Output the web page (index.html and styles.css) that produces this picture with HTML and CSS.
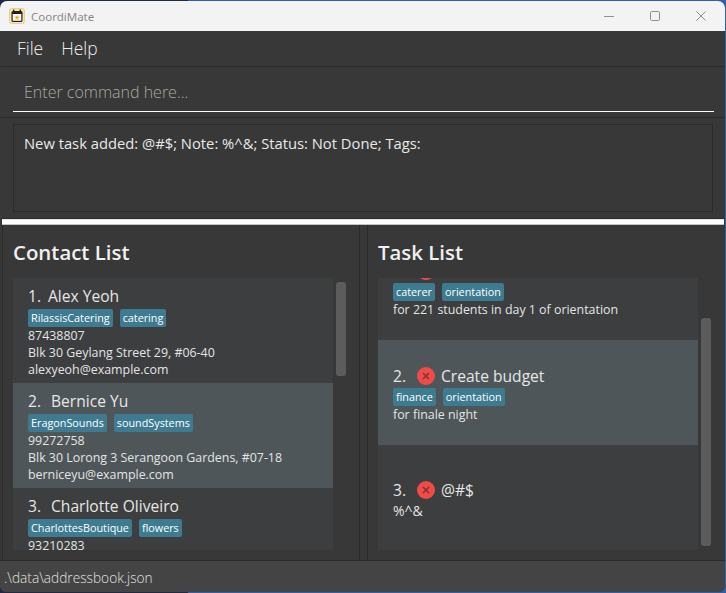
FILE: index.html
```html
<!DOCTYPE html>
<html lang="en">
<head>
<meta charset="utf-8">
<title>CoordiMate</title>
<link rel="stylesheet" href="styles.css">
</head>
<body>
<div class="window">
  <header class="titlebar">
    <svg class="appicon" width="16" height="16" viewBox="0 0 16 16"><rect x="0.5" y="0.5" width="15" height="15" rx="2" fill="#fbe3a6" stroke="#e8cf95"/><rect x="2.5" y="3" width="11" height="11" rx="1.5" fill="#222"/><rect x="4" y="1.5" width="1.4" height="3" fill="#222"/><rect x="10.6" y="1.5" width="1.4" height="3" fill="#222"/><rect x="3.7" y="6" width="8.6" height="6.8" fill="#fff"/><path d="M8 7l.8 1.6 1.7.2-1.2 1.2.3 1.7L8 11l-1.6.7.3-1.7-1.2-1.2 1.7-.2z" fill="#f5b312"/></svg>
    <span class="apptitle">CoordiMate</span>
    <div class="controls">
      <svg width="12" height="12" viewBox="0 0 12 12"><path d="M1 6.5h10" stroke="#8f8f8f" fill="none"/></svg>
      <svg width="12" height="12" viewBox="0 0 12 12"><rect x="1.5" y="1.5" width="9" height="9" rx="1.2" stroke="#8f8f8f" fill="none"/></svg>
      <svg width="12" height="12" viewBox="0 0 12 12"><path d="M1.5 1.5l9 9M10.5 1.5l-9 9" stroke="#8f8f8f" fill="none"/></svg>
    </div>
  </header>
  <nav class="menubar"><span>File</span><span>Help</span></nav>
  <section class="commandbox"><div class="commandinput">Enter command here...</div></section>
  <section class="resultbox"><div class="resulttext">New task added: @#$; Note: %^&amp;; Status: Not Done; Tags:</div></section>
  <div class="splitter"></div>
  <main class="panes">
    <section class="pane">
      <h2>Contact List</h2>
      <div class="listwrap">
        <div class="list">
          <article class="card">
            <div class="name"><span class="num one">1.</span>Alex Yeoh</div>
            <div class="tags"><span class="tag">RilassisCatering</span><span class="tag">catering</span></div>
            <div class="line">87438807</div>
            <div class="line">Blk 30 Geylang Street 29, #06-40</div>
            <div class="line">alexyeoh@example.com</div>
          </article>
          <article class="card selected">
            <div class="name"><span class="num">2.</span>Bernice Yu</div>
            <div class="tags"><span class="tag">EragonSounds</span><span class="tag">soundSystems</span></div>
            <div class="line">99272758</div>
            <div class="line">Blk 30 Lorong 3 Serangoon Gardens, #07-18</div>
            <div class="line">berniceyu@example.com</div>
          </article>
          <article class="card">
            <div class="name"><span class="num">3.</span>Charlotte Oliveiro</div>
            <div class="tags"><span class="tag">CharlottesBoutique</span><span class="tag">flowers</span></div>
            <div class="line">93210283</div>
          </article>
        </div>
        <div class="scrolltrack contact"><div class="thumb"></div></div>
      </div>
    </section>
    <section class="pane">
      <h2>Task List</h2>
      <div class="listwrap">
        <div class="list">
          <article class="card task first">
            <div class="name"><span class="num"></span><svg class="status" viewBox="0 0 18 18"><circle cx="9" cy="9" r="9" fill="#f44a45"/><path d="M6 6l6 6M12 6l-6 6" stroke="#5a3a3d" stroke-width="1.2"/></svg></div>
            <div class="tags"><span class="tag">caterer</span><span class="tag">orientation</span></div>
            <div class="line">for 221 students in day 1 of orientation</div>
          </article>
          <article class="card task selected">
            <div class="name"><span class="num">2.</span><svg class="status" viewBox="0 0 18 18"><circle cx="9" cy="9" r="9" fill="#f44a45"/><path d="M6 6l6 6M12 6l-6 6" stroke="#5a3a3d" stroke-width="1.2"/></svg>Create budget</div>
            <div class="tags"><span class="tag">finance</span><span class="tag">orientation</span></div>
            <div class="line">for finale night</div>
          </article>
          <article class="card task">
            <div class="name"><span class="num">3.</span><svg class="status" viewBox="0 0 18 18"><circle cx="9" cy="9" r="9" fill="#f44a45"/><path d="M6 6l6 6M12 6l-6 6" stroke="#5a3a3d" stroke-width="1.2"/></svg>@#$</div>
            <div class="line notegap">%^&amp;</div>
          </article>
        </div>
        <div class="scrolltrack taskbar"><div class="thumb"></div></div>
      </div>
    </section>
  </main>
  <footer class="statusbar">.\data\addressbook.json</footer>
</div>
</body>
</html>
```
FILE: styles.css
```css
* { box-sizing: border-box; }
html, body { margin: 0; padding: 0; height: 100%; overflow: hidden; }
body {
  background: linear-gradient(90deg, #1f2a48 0, #1f2a48 188px, #2f5fb0 188px);
  font-family: "Open Sans", "Noto Sans", sans-serif;
  color: #fff;
  padding: 1px 1px 1px 0;
}
.window {
  height: 591px;
  display: flex;
  flex-direction: column;
  background: #383838;
  border-radius: 7px 7px 6px 6px;
  overflow: hidden;
}
.titlebar {
  height: 30px;
  flex: none;
  background: #f3f3f3;
  display: flex;
  align-items: center;
  padding: 0 0 0 9px;
}
.appicon { flex: none; margin-right: 6px; }
.apptitle { font-size: 11.5px; color: #8b8b8b; font-family: "Noto Sans", sans-serif; }
.controls { margin-left: auto; display: flex; gap: 34px; padding-right: 18px; }
.menubar {
  height: 35px;
  flex: none;
  display: flex;
  align-items: center;
  gap: 18px;
  padding: 0 0 1px 17px;
  font-size: 17.4px;
  font-weight: 300;
  color: #eee;
}
.commandbox {
  height: 52px;
  flex: none;
  border-top: 1px solid #2b2b2b;
  border-bottom: 1px solid #2b2b2b;
  margin-left: 1px;
  padding: 0 11px 5px 12px;
  display: flex;
  align-items: flex-end;
}
.commandinput {
  flex: 1;
  height: 40px;
  border-bottom: 1px solid #fff;
  padding: 0 0 0 11px;
  font-size: 16px;
  line-height: 41px;
  font-weight: 300;
  color: #a9a99f;
  white-space: nowrap;
}
.resultbox {
  height: 101px;
  flex: none;
  margin-left: 2px;
  border-bottom: 1px solid #2b2b2b;
  padding: 6px 12px 6px 11px;
}
.resulttext {
  height: 88px;
  border: 1px solid #2b2b2b;
  padding: 8px 10px;
  font-size: 14.75px;
  line-height: 20px;
  color: #e8e8e8;
  white-space: nowrap;
}
.splitter {
  height: 6px;
  flex: none;
  background: #fff;
  border-top: 1px solid #e4e4e4;
  border-bottom: 1px solid #c4c4c4;
  margin-left: 2px;
  margin-right: 1px;
}
.panes {
  flex: 1;
  min-height: 0;
  display: flex;
  gap: 7px;
  padding: 0 3px 0 2px;
  border-bottom: 1px solid #2b2b2b;
}
.pane {
  width: 358px;
  border-left: 1px solid #2b2b2b;
  display: flex;
  flex-direction: column;
  padding: 0 0 10px 10px;
  min-width: 0;
}
.pane:first-child { border-right: 1px solid #2b2b2b; width: 358px; }
.pane:last-child { flex: 1; }
h2 {
  margin: 0;
  height: 53px;
  flex: none;
  font-size: 20.4px;
  font-weight: 600;
  line-height: 54px;
  color: #f0f0f0;
}
.listwrap { flex: 1; min-height: 0; display: flex; }
.list {
  width: 320px;
  flex: none;
  height: 272px;
  background: #3c3e3f;
  overflow: hidden;
}
.card {
  height: 105px;
  padding: 8px 15px 0;
  display: flex;
  flex-direction: column;
  color: #e4e4e4;
  overflow: hidden;
}
.card.selected { background: #4f5659; }
.card.task { justify-content: center; padding-top: 0; }
.card.first { margin-top: -43px; }
.name {
  display: flex;
  align-items: center;
  font-size: 15.6px;
  font-weight: 500;
  line-height: 18px;
  height: 20px;
  color: #e6e6e6;
  white-space: nowrap;
}
.task .name { font-weight: 400; height: 24px; padding-top: 2px; font-size: 15.6px; }
.num { width: 23px; flex: none; }
.num.one { width: 20px; }
.task .num { width: 24px; }
.status { width: 18px; height: 18px; flex: none; margin-right: 6px; }
.tags { display: flex; gap: 7px; margin-top: 3px; }
.task .tags { margin-top: 1px; }
.tag {
  height: 18px;
  padding: 0 3px;
  background: #3e7b91;
  border-radius: 2px;
  font-size: 10.8px;
  line-height: 18px;
  color: #fff;
  white-space: nowrap;
}
.line { font-size: 12.4px; line-height: 17px; white-space: nowrap; }
.notegap { margin-top: 1px; font-size: 14px; }
.scrolltrack { width: 14px; flex: none; height: 272px; padding: 0 1px 0 3px; }
.thumb { background: #5c5c5c; border-radius: 3px; width: 10px; }
.contact .thumb { margin-top: 4px; height: 94px; }
.taskbar .thumb { margin-top: 40px; height: 228px; }
.statusbar {
  height: 31px;
  flex: none;
  background: #444;
  font-size: 13.7px;
  font-weight: 300;
  line-height: 33px;
  padding-left: 4px;
  color: #e0e0e0;
}
```
